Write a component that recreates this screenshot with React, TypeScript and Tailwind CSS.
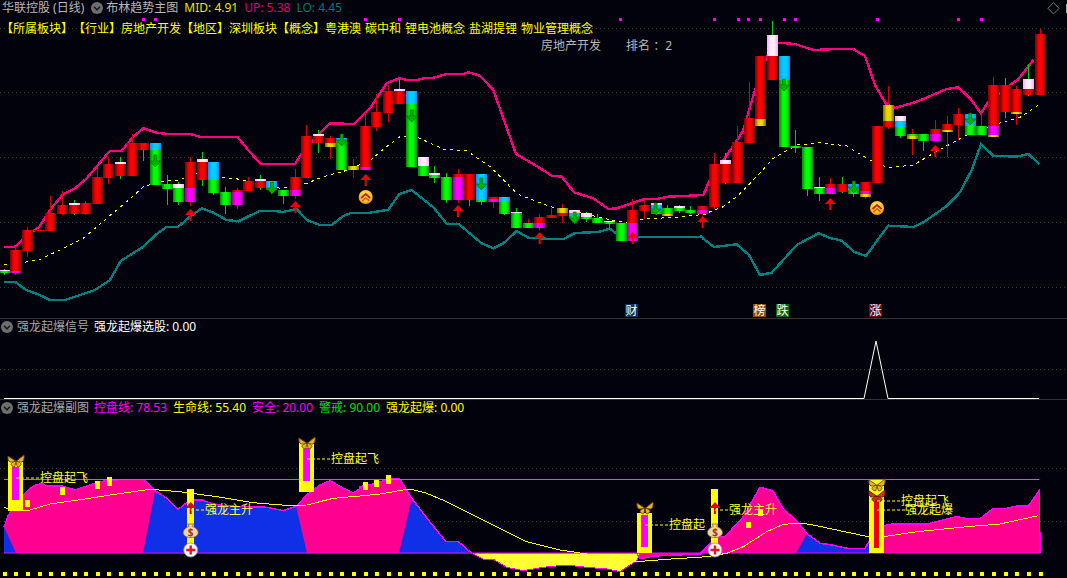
const FONT = "font-['Noto_Sans','Noto_Sans_CJK_SC',sans-serif]";

type Pt = [number, number];
const shift = (ox: number, oy: number, pts: number[][]): Pt[] => pts.map(([x, y]) => [ox + x / 3, oy + y / 3]);
const str = (pts: Pt[]) => pts.map(([x, y]) => `${x.toFixed(1)},${y.toFixed(1)}`).join(' ');

const upper = [
  ...shift(0, 60, [[12, 560], [45, 560], [66, 540], [100, 513], [118, 500], [150, 450], [190, 402], [225, 385], [260, 355], [330, 272], [365, 272], [400, 230], [430, 205], [470, 218], [500, 222], [570, 222], [600, 230], [712, 230], [740, 265], [782, 312], [885, 312], [905, 280], [940, 240], [990, 190]]),
  ...shift(350, 60, [[12, 192], [60, 145], [110, 70], [148, 55], [170, 60], [200, 60], [230, 53], [250, 53], [290, 42], [340, 42], [355, 37], [390, 47], [430, 90], [498, 282], [560, 318], [605, 347], [635, 350], [672, 397], [730, 415], [775, 447], [800, 445], [883, 417], [920, 417], [955, 410], [1060, 405]]),
  ...shift(700, 0, [[10, 585], [27, 545], [70, 480], [112, 420], [130, 390], [165, 270], [200, 170], [235, 128], [285, 132], [340, 150], [390, 148], [460, 147], [495, 168], [525, 255], [558, 312], [585, 324], [650, 305], [740, 267], [775, 262], [810, 295], [843, 340], [865, 305], [930, 255], [955, 238], [1000, 180]]),
];
const middle = [
  ...shift(0, 60, [[12, 613], [66, 608], [120, 598], [180, 570], [250, 535], [320, 475], [380, 425], [430, 380], [480, 365], [540, 360], [580, 340], [670, 352], [720, 358], [840, 385], [920, 370], [970, 350], [1045, 330]]),
  ...shift(350, 60, [[65, 298], [100, 268], [150, 230], [205, 233], [280, 267], [350, 272], [420, 320], [490, 390], [510, 405], [600, 440], [660, 450], [760, 475], [830, 488], [870, 478], [1000, 470], [1070, 462]]),
  ...shift(700, 0, [[30, 635], [70, 620], [110, 590], [160, 540], [220, 475], [290, 435], [360, 428], [440, 438], [510, 480], [565, 503], [640, 495], [700, 460], [800, 405], [880, 375], [960, 352], [1015, 315]]),
];
const lower = [
  ...shift(0, 60, [[12, 665], [45, 665], [78, 690], [115, 703], [150, 720], [195, 720], [285, 690], [330, 660], [362, 603], [430, 560], [470, 522], [500, 500], [535, 500], [570, 470], [605, 445], [640, 458], [680, 480], [715, 484], [780, 452], [815, 452], [850, 456], [890, 447], [920, 480], [960, 495], [995, 495], [1030, 468]]),
  ...shift(350, 60, [[0, 460], [60, 458], [115, 449], [148, 402], [185, 390], [250, 442], [290, 491], [325, 491], [395, 550], [430, 565], [460, 550], [500, 513], [535, 533], [605, 537], [640, 537], [675, 519], [745, 516], [780, 506], [815, 532], [1055, 530]]),
  ...shift(700, 0, [[10, 716], [42, 741], [110, 733], [147, 765], [180, 825], [215, 818], [290, 735], [355, 700], [390, 714], [425, 722], [462, 755], [497, 768], [565, 677], [640, 681], [670, 667], [740, 618], [780, 577], [815, 510], [843, 433], [880, 467], [950, 470], [985, 462], [1018, 492]]),
];

// wick top, wick bottom, wick colour, then body pieces [colour, top, bottom]
type Seg = [string, number, number];
type Candle = [number, number, string, Seg[]];
const candles: Candle[] = [
  [269, 275, 'g', [['p', 270, 271], ['g', 271, 273]]],
  [247, 275, 'r', [['r', 250, 271], ['m', 271, 273]]],
  [227, 257, 'r', [['r', 230, 251]]],
  [230, 231, 'r', [['r', 230, 231]]],
  [196, 231, 'r', [['r', 213, 231]]],
  [191, 215, 'r', [['r', 205, 214]]],
  [200, 215, 'g', [['p', 203, 205], ['r', 205, 214]]],
  [201, 215, 'r', [['r', 203, 214]]],
  [167, 204, 'r', [['r', 177, 204]]],
  [157, 184, 'r', [['r', 164, 178]]],
  [157, 179, 'g', [['p', 162, 164], ['r', 164, 176]]],
  [134, 176, 'r', [['r', 143, 176]]],
  [143, 161, 'g', [['r', 143, 150]]],
  [150, 185, 'g', [['b', 143, 150], ['g', 150, 185]]],
  [175, 205, 'g', [['g', 184, 189]]],
  [182, 205, 'g', [['p', 184, 188], ['g', 188, 202]]],
  [157, 206, 'r', [['r', 162, 188], ['m', 188, 202]]],
  [152, 186, 'g', [['p', 159, 162], ['r', 162, 180]]],
  [162, 195, 'g', [['b', 162, 180], ['g', 180, 193]]],
  [187, 214, 'g', [['g', 192, 205]]],
  [188, 209, 'r', [['r', 190, 192], ['m', 192, 205]]],
  [177, 191, 'r', [['r', 181, 191]]],
  [175, 190, 'g', [['p', 179, 181], ['r', 181, 188]]],
  [181, 194, 'g', [['b', 181, 188], ['g', 188, 190]]],
  [190, 204, 'g', [['g', 190, 196]]],
  [169, 199, 'r', [['r', 177, 190], ['m', 190, 196]]],
  [125, 178, 'r', [['r', 136, 178]]],
  [130, 153, 'g', [['p', 134, 136], ['r', 136, 143]]],
  [136, 159, 'r', [['r', 138, 143], ['y', 143, 147]]],
  [134, 170, 'g', [['b', 138, 142], ['g', 142, 170]]],
  [159, 178, 'r', [['y', 166, 170]]],
  [113, 170, 'r', [['r', 126, 167], ['m', 167, 170]]],
  [94, 131, 'r', [['r', 112, 127]]],
  [85, 122, 'r', [['r', 91, 113]]],
  [79, 104, 'g', [['p', 89, 91], ['r', 91, 104]]],
  [91, 167, 'g', [['b', 91, 104], ['g', 104, 167]]],
  [157, 176, 'g', [['p', 157, 166], ['g', 166, 176]]],
  [166, 183, 'g', [['p', 173, 175], ['g', 175, 178]]],
  [173, 203, 'g', [['g', 177, 200]]],
  [169, 203, 'r', [['r', 174, 177], ['m', 177, 200]]],
  [174, 206, 'g', [['r', 174, 200]]],
  [174, 205, 'g', [['b', 174, 200], ['g', 200, 202]]],
  [197, 208, 'r', [['r', 197, 199], ['m', 199, 202]]],
  [197, 215, 'g', [['b', 197, 202], ['g', 202, 214]]],
  [208, 228, 'g', [['p', 212, 213], ['g', 213, 228]]],
  [219, 228, 'r', [['g', 223, 228]]],
  [214, 230, 'r', [['r', 217, 223], ['m', 223, 228]]],
  [208, 218, 'r', [['r', 215, 218]]],
  [204, 223, 'r', [['y', 208, 213], ['r', 213, 216]]],
  [210, 220, 'g', [['p', 210, 213], ['b', 213, 216], ['g', 216, 218]]],
  [212, 222, 'g', [['p', 213, 217], ['g', 217, 219]]],
  [214, 223, 'g', [['g', 218, 223]]],
  [222, 230, 'g', [['p', 221, 222], ['g', 222, 224]]],
  [223, 241, 'g', [['g', 223, 241]]],
  [199, 241, 'r', [['r', 210, 223], ['m', 223, 241]]],
  [200, 219, 'r', [['r', 205, 211]]],
  [203, 215, 'g', [['p', 203, 205], ['b', 205, 211], ['g', 211, 214]]],
  [205, 216, 'g', [['g', 208, 214], ['y', 214, 216]]],
  [205, 213, 'g', [['p', 206, 208], ['g', 208, 211]]],
  [206, 214, 'g', [['g', 210, 213]]],
  [206, 215, 'r', [['r', 206, 210], ['m', 210, 214]]],
  [153, 209, 'r', [['r', 164, 207]]],
  [153, 184, 'g', [['p', 160, 164], ['r', 164, 183]]],
  [126, 183, 'r', [['r', 142, 183]]],
  [82, 143, 'r', [['r', 118, 143]]],
  [56, 126, 'r', [['r', 56, 119], ['y', 119, 126]]],
  [21, 80, 'g', [['p', 35, 56], ['r', 56, 80]]],
  [56, 147, 'g', [['b', 56, 80], ['g', 80, 147]]],
  [130, 153, 'g', [['g', 146, 148]]],
  [147, 196, 'g', [['g', 147, 189]]],
  [177, 201, 'g', [['p', 187, 188], ['g', 188, 194]]],
  [178, 194, 'r', [['r', 184, 188], ['m', 188, 194]]],
  [177, 193, 'g', [['r', 184, 192]]],
  [184, 197, 'g', [['b', 184, 190], ['g', 190, 194]]],
  [182, 199, 'r', [['r', 182, 191], ['m', 191, 194], ['y', 194, 197]]],
  [126, 183, 'r', [['r', 126, 183]]],
  [86, 129, 'r', [['y', 105, 121], ['r', 121, 127]]],
  [116, 138, 'g', [['p', 116, 121], ['b', 121, 127], ['g', 127, 136]]],
  [129, 155, 'r', [['g', 134, 136], ['y', 136, 139]]],
  [134, 151, 'g', [['g', 134, 141]]],
  [120, 141, 'r', [['r', 129, 134], ['m', 134, 141]]],
  [116, 157, 'r', [['r', 124, 130], ['y', 130, 132]]],
  [108, 140, 'r', [['r', 114, 125]]],
  [114, 135, 'g', [['b', 114, 126], ['g', 126, 135]]],
  [114, 135, 'r', [['g', 126, 135]]],
  [77, 137, 'r', [['r', 85, 126], ['m', 126, 135], ['y', 135, 137]]],
  [78, 118, 'g', [['r', 85, 112]]],
  [86, 125, 'r', [['r', 89, 112], ['y', 112, 114]]],
  [64, 96, 'g', [['p', 79, 89], ['r', 89, 95]]],
  [29, 95, 'r', [['r', 34, 95]]],
];
const cx = (i: number) => 3.7 + 11.64 * i;

const fills: Record<string, string> = { r: 'url(#gr)', g: 'url(#gg)', b: 'url(#gb)', m: 'url(#gm)', p: 'url(#gp)', y: 'url(#gy)' };

const upArrows: Pt[] = [[190.5, 209], [295.5, 201], [365.7, 174], [458, 205], [539.7, 232], [632.7, 232], [702.7, 216], [830.3, 198], [935.3, 145]];
const downArrows: Pt[] = [[155.3, 155], [272, 182], [341.7, 134], [411.7, 110], [481.3, 178], [574.7, 212], [655.7, 203], [784, 79], [853.7, 181], [970.3, 113]];
const topDots = [142, 154, 364, 398, 619, 713, 737, 747, 759, 783, 794, 876, 957, 980];

const profileA = [
  ...shift(0, 400, [[12, 382], [25, 345], [60, 300], [75, 280], [100, 258], [125, 250], [140, 258], [185, 258], [225, 270], [260, 258], [300, 245], [340, 240], [380, 238], [430, 238], [465, 272], [500, 295], [535, 328], [570, 300], [605, 300], [640, 312], [680, 318], [740, 320], [800, 322], [850, 332], [890, 318], [920, 285], [960, 255], [990, 242], [1030, 265], [1060, 278], [1078, 268]]),
  ...shift(360, 470, [[0, 50], [50, 40], [90, 25], [118, 25], [155, 85], [205, 150], [258, 215], [295, 215], [335, 250]]),
];
const profileB = [
  ...shift(360, 470, [[830, 250], [840, 266], [880, 258], [1020, 252]]),
  ...shift(700, 400, [[30, 432], [42, 412], [75, 410], [130, 350], [180, 262], [218, 272], [250, 328], [290, 362], [322, 402], [360, 430], [395, 435], [440, 445], [495, 445], [510, 420], [550, 380], [565, 373], [620, 372], [680, 372], [770, 350], [800, 356], [840, 356], [880, 325], [920, 325], [950, 318], [985, 318], [1018, 272]]),
];
const under = shift(360, 470, [[335, 250], [370, 268], [400, 268], [440, 292], [490, 302], [550, 292], [620, 285], [680, 292], [740, 297], [780, 305], [830, 272], [840, 250]]);
const lifeLine = [
  ...shift(0, 400, [[12, 322], [40, 330], [90, 330], [150, 312], [250, 298], [330, 285], [450, 268], [540, 275], [650, 290], [760, 308], [870, 317], [920, 315], [1000, 295], [1078, 288]]),
  ...shift(360, 470, [[0, 78], [60, 72], [130, 60], [155, 58], [200, 70], [260, 95], [340, 135], [430, 180], [500, 215], [600, 240], [655, 248], [830, 275], [920, 268], [1040, 260]]),
  ...shift(700, 400, [[80, 460], [130, 440], [200, 395], [250, 373], [300, 370], [330, 373], [420, 392], [505, 410], [550, 410], [650, 395], [800, 380], [900, 372], [1015, 347]]),
];
const base = 553;
const smallSquares = [[25, 500, 7], [60, 487, 8], [95, 481, 8], [107, 477, 9], [363, 482, 8], [374, 480, 7], [386, 475, 9], [758, 510, 6], [746, 522, 6]];

function Chevron() {
  return (
    <svg width="12" height="12" viewBox="0 0 12 12" className="shrink-0">
      <circle cx="6" cy="6" r="6" fill="#6f6f6f" />
      <path d="M3 4.8 6 7.8 9 4.8" fill="none" stroke="#1a1a1a" strokeWidth="1.6" />
    </svg>
  );
}

function Butterfly({ x, y, red }: { x: number; y: number; red?: boolean }) {
  const wing = red ? '#d83020' : '#e8b428';
  const edge = red ? '#701010' : '#6a4400';
  return (
    <g transform={`translate(${x} ${y})`} stroke={edge} strokeWidth=".9" fill={wing}>
      <path d="M-.5 0-8-5C-8.500-2-7.500 0-6 1-2 1-.5 0-.5 0Z" />
      <path d="M.5 0 8-6C8.500-2 7.500 0 6 1 2 1 .5 0 .5 0Z" />
      <path d="M-.5 0C-3 1-5 2-5 3.500-4 5.500-2 6-1.500 6-.5 4-.5 2-.5 0Z" />
      <path d="M.5 0C3 1 5 2 5 3.500 4 5.500 2 6 1.500 6 .5 4 .5 2 .5 0Z" />
    </g>
  );
}

function MoneyBag({ x, y }: { x: number; y: number }) {
  return (
    <g transform={`translate(${x} ${y})`}>
      <path d="M-3-7H3L1.500-4.500C5-3.500 7.500-1 7.500 1.500 7.500 5 4 6.500 0 6.500S-7.500 5-7.500 1.500C-7.500-1-5-3.500-1.500-4.500Z" fill="#f0d8a0" stroke="#806030" strokeWidth=".8" />
      <text x="0" y="4.500" textAnchor="middle" fontSize="10" fontWeight="700" fill="#a03030">$</text>
    </g>
  );
}

function PlusBadge({ x, y }: { x: number; y: number }) {
  return (
    <g transform={`translate(${x} ${y})`}>
      <circle r="7" fill="#f8f8f8" stroke="#909090" strokeWidth=".8" />
      <path d="M0-4.500V4.500M-4.500 0H4.500" stroke="#f01020" strokeWidth="2.400" />
    </g>
  );
}

function GoldBadge({ x, y }: { x: number; y: number }) {
  return (
    <g transform={`translate(${x} ${y})`}>
      <circle r="7" fill="url(#gold)" />
      <path d="M-4.500 1 0-3 4.500 1" fill="none" stroke="#c02010" strokeWidth="1.800" />
      <path d="M-3.500 4 0 .800 3.500 4" fill="none" stroke="#e05010" strokeWidth="1.500" />
    </g>
  );
}

function UpArrow({ x, y }: { x: number; y: number }) {
  return <polygon points={str([[x, y], [x + 5.5, y + 6], [x + 1, y + 6], [x + 1, y + 12], [x - 1, y + 12], [x - 1, y + 6], [x - 5.5, y + 6]])} fill="#f00000" />;
}

function DownArrow({ x, y }: { x: number; y: number }) {
  return <polygon points={str([[x - 1.5, y], [x + 1.5, y], [x + 1.5, y + 6], [x + 5.5, y + 6], [x, y + 12], [x - 5.5, y + 6], [x - 1.5, y + 6]])} fill="#00b400" stroke="#005a00" strokeWidth=".6" />;
}

function Tag({ x, bg, text }: { x: number; bg: string; text: string }) {
  return (
    <g>
      <rect x={x} y="304" width="13" height="13" fill={bg} />
      <text x={x + 0.5} y="315" fontSize="12" fill="#fff">{text}</text>
    </g>
  );
}

function MainChart() {
  return (
    <svg className={`absolute inset-0 ${FONT}`} width="1067" height="318" viewBox="0 0 1067 318">
      <defs>
        {[['gr', '#7a0000', '#ff0000'], ['gg', '#008a00', '#00ff00'], ['gb', '#0090ff', '#00d0ff'], ['gm', '#a000a0', '#ff00ff'], ['gp', '#ffa8ff', '#fff0ff'], ['gy', '#807000', '#e8d800']].map(([id, edge, mid]) => (
          <linearGradient key={id} id={id}>
            <stop offset="0" stopColor={edge} />
            <stop offset=".35" stopColor={mid} />
            <stop offset=".65" stopColor={mid} />
            <stop offset="1" stopColor={edge} />
          </linearGradient>
        ))}
        <radialGradient id="gold" cy=".35" r=".7">
          <stop offset="0" stopColor="#fff070" />
          <stop offset=".6" stopColor="#ffc020" />
          <stop offset="1" stopColor="#f09000" />
        </radialGradient>
      </defs>
      {[28, 92, 157, 222, 287].map((y) => (
        <line key={y} x1="0" x2="1067" y1={y + 0.5} y2={y + 0.5} stroke="#3c3c3c" strokeDasharray="1 3" />
      ))}
      <polyline points={str(lower)} fill="none" stroke="#008080" strokeWidth="2.400" shapeRendering="crispEdges" />
      <polyline points={str(middle)} fill="none" stroke="#ffff00" strokeWidth="1" strokeDasharray="3 4" shapeRendering="crispEdges" />
      <polyline points={str(upper)} fill="none" stroke="#ff0080" strokeWidth="2.400" shapeRendering="crispEdges" />
      {candles.map(([wt, wb, wc, segs], i) => {
        const x = Math.round(cx(i));
        return (
          <g key={i} shapeRendering="crispEdges">
            <rect x={x} y={wt} width="1" height={wb - wt} fill={wc === 'r' ? '#e00000' : '#00d000'} />
            {segs.map(([c, t, b]) => (
              <rect key={t} x={x - 5} y={t} width="11" height={b - t} fill={fills[c]} />
            ))}
          </g>
        );
      })}
      {upArrows.map(([x, y]) => <UpArrow key={x} x={x} y={y} />)}
      {downArrows.map(([x, y]) => <DownArrow key={x} x={x} y={y} />)}
      {topDots.map((x) => <rect key={x} x={x} y="18" width="3" height="3" fill="#ff00ff" />)}
      <GoldBadge x={365.7} y={197} />
      <GoldBadge x={877} y={208} />
      <Tag x={625} bg="#0a3560" text="财" />
      <Tag x={753} bg="#8a4a10" text="榜" />
      <Tag x={776} bg="#0a6a0a" text="跌" />
      <Tag x={869} bg="#6a0a0a" text="涨" />
      <path d="M1053.500 2.500 1059 8.300 1053.500 14 1048 8.300Z" fill="none" stroke="#777" />
      <rect x="1066" y="4" width="1" height="9" fill="#aaa" />
    </svg>
  );
}

function SignalChart() {
  return (
    <svg className="absolute inset-0" width="1067" height="81" viewBox="0 319 1067 81">
      <line x1="0" x2="1067" y1="369.5" y2="369.5" stroke="#3c3c3c" strokeDasharray="1 3" />
      <polyline points="4,398.500 864,398.500 876,341 888,398.500 1039,398.500" fill="none" stroke="#fff" strokeWidth="1" />
    </svg>
  );
}

function Label({ x, y, from, text }: { x: number; y: number; from: number; text: string }) {
  return (
    <g>
      <line x1={from} x2={x} y1={y} y2={y} stroke="#ffff00" strokeDasharray="3 2" />
      <text x={x} y={y + 4} fontSize="12" fill="#ffff33">{text}</text>
    </g>
  );
}

function Bar({ x, w, top, inner, color }: { x: number; w: number; top: number; inner?: [number, number, number, number]; color?: string }) {
  return (
    <g shapeRendering="crispEdges">
      <rect x={x} y={top} width={w} height={base - top} fill="#ffff00" />
      {inner && <rect x={inner[0]} y={inner[2]} width={inner[1]} height={inner[3] - inner[2]} fill={color ?? '#ff00ff'} />}
    </g>
  );
}

function SubChart() {
  return (
    <svg className={`absolute inset-0 ${FONT}`} width="1067" height="178" viewBox="0 400 1067 178">
      <defs>
        <clipPath id="area">
          <polygon points={`4,${base} ${str(profileA)} ${str(profileB)} 1040,${base}`} />
        </clipPath>
      </defs>
      {[468, 521].map((y) => (
        <line key={y} x1="0" x2="1067" y1={y + 0.5} y2={y + 0.5} stroke="#3c3c3c" strokeDasharray="1 3" />
      ))}
      <polygon points={`4,${base} ${str(profileA)}`} fill="#ff0090" />
      <polygon points={`${str(profileB)} 1040,${base} 637,${base}`} fill="#ff0090" />
      <g clipPath="url(#area)">
        <polygon points="4,527 4,553 16,553" fill="#1030e8" />
        <polygon points={`143,${base} 155,491 155,480 296,480 296,506 307,${base}`} fill="#1030e8" />
        <polygon points={`399,${base} 412,498 412,490 480,490 480,${base}`} fill="#1030e8" />
        <polygon points={`796,${base} 807,534 807,520 870,520 870,${base}`} fill="#1030e8" />
      </g>
      <polygon points={str(under)} fill="#ffff33" />
      <polyline points={str(profileA)} fill="none" stroke="#ff00ff" strokeWidth="1.500" shapeRendering="crispEdges" />
      <polyline points={str(under)} fill="none" stroke="#ff00ff" strokeWidth="1" shapeRendering="crispEdges" />
      <polyline points={`${str(profileB)} 1040,${base}`} fill="none" stroke="#ff00ff" strokeWidth="1.500" shapeRendering="crispEdges" />
      <line x1="4" x2="1040" y1={base} y2={base} stroke="#ff00ff" strokeWidth="1" />
      <line x1="4" x2="1039" y1="479.500" y2="479.500" stroke="#00e000" strokeWidth="1" />
      <polyline points={str(lifeLine)} fill="none" stroke="#ffff00" strokeWidth="1" shapeRendering="crispEdges" />
      {smallSquares.map(([x, y, h]) => <rect key={x} x={x} y={y} width="5" height={h} fill="#ffff00" />)}
      <g shapeRendering="crispEdges">
        <rect x="8" y="461" width="15" height="50" fill="#ffff00" />
        <rect x="12" y="467" width="7" height="33" fill="#ff00ff" />
        <rect x="299" y="443" width="15" height="49" fill="#ffff00" />
        <rect x="303" y="448" width="7" height="33" fill="#ff00ff" />
      </g>
      <Bar x={637} w={15} top={513} inner={[641, 7, 515, 547]} />
      <Bar x={187} w={7} top={489} />
      <Bar x={711} w={7} top={489} />
      <Bar x={869} w={15} top={480} inner={[874, 5, 500, 548]} color="#f00000" />
      <UpArrow x={190.7} y={502} />
      <UpArrow x={715} y={502} />
      <MoneyBag x={190.7} y={531} />
      <MoneyBag x={715} y={531} />
      <PlusBadge x={190.7} y={550} />
      <PlusBadge x={715} y={550} />
      <Butterfly x={16} y={461} />
      <Butterfly x={307} y={443} />
      <Butterfly x={645} y={508} />
      <Butterfly x={877} y={485} />
      <Butterfly x={877} y={496} red />
      <Label x={40} y={478} from={16} text="控盘起飞" />
      <Label x={331} y={459} from={307} text="控盘起飞" />
      <Label x={205} y={510} from={191} text="强龙主升" />
      <Label x={669} y={525} from={645} text="控盘起" />
      <Label x={729} y={510} from={715} text="强龙主升" />
      <Label x={901} y={501} from={877} text="控盘起飞" />
      <Label x={905} y={510} from={877} text="强龙起爆" />
      {Array.from({ length: 90 }, (_, i) => (
        <rect key={i} x={Math.round(cx(i)) - 1} y="572" width="4" height="4" fill="#ffff00" shapeRendering="crispEdges" />
      ))}
    </svg>
  );
}

export default function App() {
  return (
    <div className={`flex h-[578px] w-[1067px] flex-col overflow-hidden bg-[#02020c] text-[12px] leading-4 ${FONT}`}>
      <div className="relative h-[319px] shrink-0 border-b border-[#333]">
        <MainChart />
        <div className="relative flex h-4 items-center pl-[2px] text-[#b8b8b8]">
          <span>华联控股 (日线)</span>
          <span className="ml-[7px]"><Chevron /></span>
          <span className="ml-[3px]">布林趋势主图</span>
          <span className="ml-[6px] text-[#e8e800]">MID: 4.91</span>
          <span className="ml-[6px] text-[#e0006a]">UP: 5.38</span>
          <span className="ml-[6px] text-[#007a7a]">LO: 4.45</span>
        </div>
        <div className="relative mt-[5px] flex h-4 gap-[4px] pl-[1px] text-[#ffff00] [text-spacing-trim:space-all]">
          <span>【所属板块】【行业】房地产开发【地区】深圳板块【概念】粤港澳</span>
          <span>碳中和</span>
          <span>锂电池概念</span>
          <span>盐湖提锂</span>
          <span>物业管理概念</span>
        </div>
        <div className="relative mt-px flex h-4 pl-[541px] text-[#b8b8b8]">
          <span>房地产开发</span>
          <span className="ml-[25px]">排名 ：2</span>
        </div>
      </div>
      <div className="relative h-[81px] shrink-0 border-b border-[#333]">
        <SignalChart />
        <div className="relative flex h-4 items-center gap-[4px] pl-px text-[#a8a8a8]">
          <Chevron />
          <span>强龙起爆信号</span>
          <span className="ml-[1px] text-white">强龙起爆选股: 0.00</span>
        </div>
      </div>
      <div className="relative flex-1">
        <SubChart />
        <div className="relative flex h-4 items-center gap-[6px] pl-px text-[#a8a8a8]">
          <span className="flex items-center gap-[4px]">
            <Chevron />
            <span>强龙起爆副图</span>
          </span>
          <span className="-ml-px text-[#ff00ff]">控盘线: 78.53</span>
          <span className="text-[#ffff00]">生命线: 55.40</span>
          <span className="text-[#ff00ff]">安全: 20.00</span>
          <span className="text-[#00e000]">警戒: 90.00</span>
          <span className="text-[#ffff00]">强龙起爆: 0.00</span>
        </div>
      </div>
    </div>
  );
}
